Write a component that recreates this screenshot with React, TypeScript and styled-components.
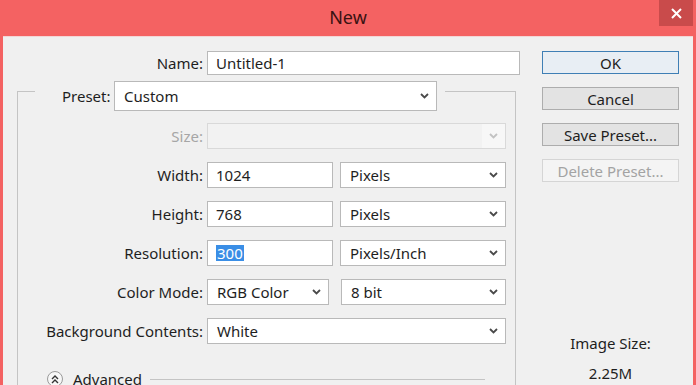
import React from "react";
import styled, { createGlobalStyle } from "styled-components";

const Global = createGlobalStyle`
  html, body { margin: 0; padding: 0; background: #f46262; }
  body { font-family: "Noto Sans", "Open Sans", sans-serif; -webkit-font-smoothing: antialiased; }
  * { box-sizing: border-box; }
`;

const Window = styled.div`
  width: 696px;
  height: 385px;
  overflow: hidden;
  background: #f46262;
  display: flex;
  flex-direction: column;
`;

const TitleBar = styled.div`
  height: 36px;
  flex: none;
  position: relative;
  display: flex;
  align-items: center;
  justify-content: center;
  padding-bottom: 2px;
  font-size: 18px;
  color: #3a1212;
`;

const CloseButton = styled.div`
  position: absolute;
  top: 0;
  right: 3px;
  width: 34px;
  height: 26px;
  background: #c94b4b;
  display: flex;
  align-items: center;
  justify-content: center;
`;

const Body = styled.div`
  flex: 1;
  margin: 0 3px;
  background: #f0f0f0;
  border-top: 1px solid #f3d6d6;
  display: flex;
  align-items: stretch;
`;

const FormArea = styled.div`
  width: 517px;
  padding: 14px 0 0 14px;
  display: flex;
  flex-direction: column;
`;

const Row = styled.div<{ $label: number; $top?: number; $h?: number }>`
  display: grid;
  grid-template-columns: ${(p) => p.$label}px 1fr;
  column-gap: 4px;
  align-items: center;
  height: ${(p) => p.$h ?? 26}px;
  margin-top: ${(p) => p.$top ?? 0}px;
`;

const Label = styled.div<{ $disabled?: boolean }>`
  text-align: right;
  font-size: 15px;
  white-space: nowrap;
  color: ${(p) => (p.$disabled ? "#a6a6a6" : "#1e1e1e")};
`;

const Fields = styled.div<{ $gap?: number }>`
  display: flex;
  gap: ${(p) => p.$gap ?? 7}px;
  height: 100%;
`;

const TextField = styled.div<{ $w: number }>`
  width: ${(p) => p.$w}px;
  height: 100%;
  background: #fff;
  border: 1px solid #b9b9b9;
  display: flex;
  align-items: center;
  padding-left: 8px;
  font-size: 15px;
  color: #1e1e1e;
`;

const Selected = styled.span`
  background: #3a8ee6;
  color: #fff;
  padding: 0 1px;
  line-height: 16px;
`;

const SelectBox = styled.div<{ $w: number; $disabled?: boolean }>`
  width: ${(p) => p.$w}px;
  height: 100%;
  background: ${(p) => (p.$disabled ? "#f2f2f2" : "#fff")};
  border: 1px solid ${(p) => (p.$disabled ? "#d9d9d9" : "#b9b9b9")};
  display: flex;
  align-items: center;
  padding-left: 9px;
  font-size: 15px;
  color: #1e1e1e;
`;

const SelectText = styled.span`
  flex: 1;
  white-space: nowrap;
`;

const ArrowZone = styled.div<{ $disabled?: boolean }>`
  width: 23px;
  height: 100%;
  display: flex;
  align-items: center;
  justify-content: center;
  background: ${(p) => (p.$disabled ? "#f7f7f7" : "transparent")};
`;

const Group = styled.fieldset`
  margin: -4px 0 0 0;
  padding: 0 9px 60px 0;
  border: 1px solid #c4c4c4;
  width: 499px;
  min-width: 0;
`;

const Legend = styled.legend`
  margin-left: 17px;
  padding: 10px 8px 0 27px;
`;

const LegendInner = styled.div`
  width: 375px;
  height: 30px;
  display: flex;
  align-items: center;
  justify-content: space-between;
`;

const AdvancedRow = styled.div`
  display: flex;
  align-items: center;
  margin-top: 25px;
  padding-left: 29px;
  padding-right: 21px;
  height: 20px;
`;

const AdvancedIcon = styled.div`
  width: 16px;
  height: 16px;
  border-radius: 50%;
  border: 1px solid #9a9a9a;
  display: flex;
  align-items: center;
  justify-content: center;
  background: #f7f7f7;
`;

const AdvancedText = styled.span`
  margin-left: 10px;
  font-size: 15px;
  color: #1e1e1e;
`;

const Rule = styled.div`
  flex: 1;
  height: 1px;
  background: #c4c4c4;
  margin-left: 8px;
`;

const Side = styled.div`
  width: 137px;
  margin-left: 22px;
  padding-top: 14px;
  display: flex;
  flex-direction: column;
  gap: 13px;
`;

const Button = styled.div<{ $primary?: boolean; $disabled?: boolean }>`
  height: 23px;
  display: flex;
  align-items: center;
  justify-content: center;
  font-size: 15px;
  color: ${(p) => (p.$disabled ? "#a3a3a3" : "#1e1e1e")};
  background: ${(p) => (p.$disabled ? "#f4f4f4" : p.$primary ? "#e8eef4" : "#e3e3e3")};
  border: 1px solid
    ${(p) => (p.$primary ? "#3f7fb5" : p.$disabled ? "#d5d5d5" : "#adadad")};
`;

const ImageInfo = styled.div`
  margin-top: 138px;
  display: flex;
  flex-direction: column;
  align-items: center;
  gap: 10px;
  font-size: 15px;
  color: #1e1e1e;
  line-height: 20px;
`;

const Chevron = ({ disabled }: { disabled?: boolean }) => (
  <svg width="9" height="6" viewBox="0 0 9 6">
    <polyline
      points="1,1 4.5,4.5 8,1"
      fill="none"
      stroke={disabled ? "#c2c2c2" : "#4a4a4a"}
      strokeWidth="1.8"
    />
  </svg>
);

const Select = ({
  w,
  value,
  disabled,
}: {
  w: number;
  value?: string;
  disabled?: boolean;
}) => (
  <SelectBox $w={w} $disabled={disabled}>
    <SelectText>{value}</SelectText>
    <ArrowZone $disabled={disabled}>
      <Chevron disabled={disabled} />
    </ArrowZone>
  </SelectBox>
);

export default function App() {
  return (
    <>
      <Global />
      <Window>
        <TitleBar>
          New
          <CloseButton>
            <svg width="11" height="11" viewBox="0 0 11 11">
              <path d="M1 1 L10 10 M10 1 L1 10" stroke="#fff" strokeWidth="2" />
            </svg>
          </CloseButton>
        </TitleBar>
        <Body>
          <FormArea>
            <Row $label={186} $h={24}>
              <Label>Name:</Label>
              <TextField $w={313}>Untitled-1</TextField>
            </Row>
            <Group>
              <Legend>
                <LegendInner>
                  <Label>Preset:</Label>
                  <Select w={323} value="Custom" />
                </LegendInner>
              </Legend>
              <Row $label={185} $top={12}>
                <Label $disabled>Size:</Label>
                <Fields>
                  <Select w={299} disabled />
                </Fields>
              </Row>
              <Row $label={185} $top={13}>
                <Label>Width:</Label>
                <Fields>
                  <TextField $w={126}>1024</TextField>
                  <Select w={166} value="Pixels" />
                </Fields>
              </Row>
              <Row $label={185} $top={13}>
                <Label>Height:</Label>
                <Fields>
                  <TextField $w={126}>768</TextField>
                  <Select w={166} value="Pixels" />
                </Fields>
              </Row>
              <Row $label={185} $top={13}>
                <Label>Resolution:</Label>
                <Fields>
                  <TextField $w={126}>
                    <Selected>300</Selected>
                  </TextField>
                  <Select w={166} value="Pixels/Inch" />
                </Fields>
              </Row>
              <Row $label={185} $top={13}>
                <Label>Color Mode:</Label>
                <Fields $gap={12}>
                  <Select w={122} value="RGB Color" />
                  <Select w={165} value="8 bit" />
                </Fields>
              </Row>
              <Row $label={185} $top={13}>
                <Label>Background Contents:</Label>
                <Fields>
                  <Select w={299} value="White" />
                </Fields>
              </Row>
              <AdvancedRow>
                <AdvancedIcon>
                  <svg width="8" height="9" viewBox="0 0 8 9">
                    <path
                      d="M1 4 L4 1 L7 4 M1 8 L4 5 L7 8"
                      fill="none"
                      stroke="#333"
                      strokeWidth="1.4"
                    />
                  </svg>
                </AdvancedIcon>
                <AdvancedText>Advanced</AdvancedText>
                <Rule />
              </AdvancedRow>
            </Group>
          </FormArea>
          <Side>
            <Button $primary>OK</Button>
            <Button>Cancel</Button>
            <Button>Save Preset...</Button>
            <Button $disabled>Delete Preset...</Button>
            <ImageInfo>
              <span>Image Size:</span>
              <span>2.25M</span>
            </ImageInfo>
          </Side>
        </Body>
      </Window>
    </>
  );
}
